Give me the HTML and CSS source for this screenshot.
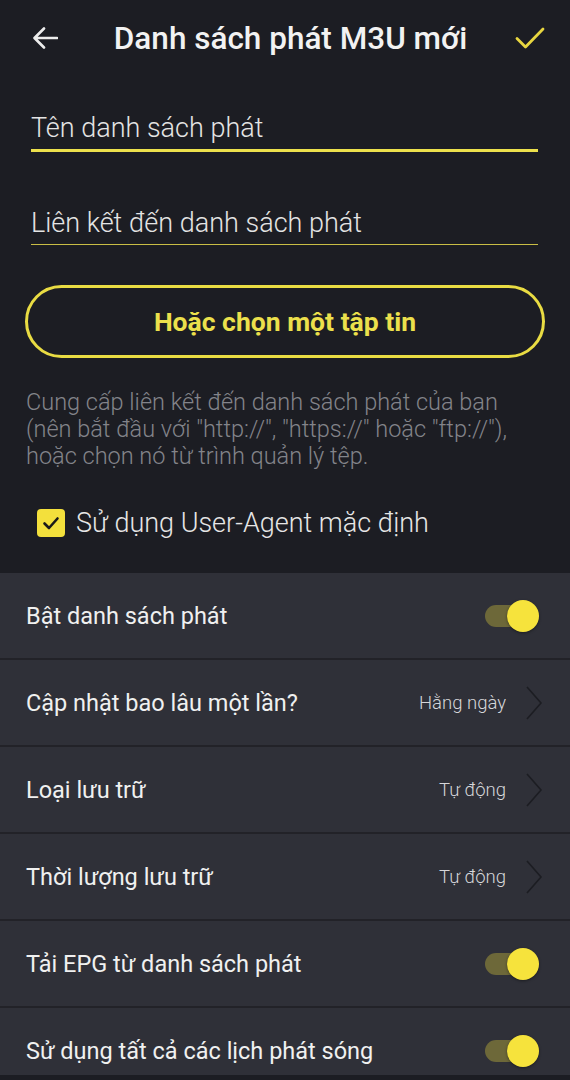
FILE: index.html
```html
<!DOCTYPE html>
<html lang="vi">
<head>
  <meta charset="UTF-8">
  <meta name="viewport" content="width=device-width, initial-scale=1.0">
  <title>Danh sách phát M3U mới</title>
  <link rel="stylesheet" href="styles.css">
</head>
<body>

  <div class="page">
    <div class="header">
      <svg class="back" width="26" height="24" viewBox="0 0 26 24">
        <path d="M25 12H3M12 2.5L2.5 12L12 21.5" fill="none" stroke="#ececec" stroke-width="2.6" stroke-linecap="round" stroke-linejoin="round"/>
      </svg>
      <h1 class="title">Danh sách phát M3U mới</h1>
      <svg class="done" width="30" height="24" viewBox="0 0 30 24">
        <path d="M2 12.5L10.5 21L28 3" fill="none" stroke="#e8d640" stroke-width="2.8" stroke-linecap="round" stroke-linejoin="round"/>
      </svg>
    </div>

    <div class="form">
      <div class="field active">Tên danh sách phát</div>
      <div class="field">Liên kết đến danh sách phát</div>

      <div class="file-btn">Hoặc chọn một tập tin</div>

      <p class="hint">Cung cấp liên kết đến danh sách phát của bạn (nên bắt đầu với "http://", "https://" hoặc "ftp://"), hoặc chọn nó từ trình quản lý tệp.</p>

      <div class="check-row">
        <span class="checkbox">
          <svg width="20" height="20" viewBox="0 0 20 20">
            <path d="M3.5 10.5L8 15L16.5 5.5" fill="none" stroke="#1a1a1a" stroke-width="2.6" stroke-linecap="round" stroke-linejoin="round"/>
          </svg>
        </span>
        <span class="check-label">Sử dụng User-Agent mặc định</span>
      </div>
    </div>

    <div class="list">
      <div class="row">
        <span class="label">Bật danh sách phát</span>
        <span class="toggle"><span class="thumb"></span></span>
      </div>
      <div class="row">
        <span class="label">Cập nhật bao lâu một lần?</span>
        <span class="value">Hằng ngày</span>
        <svg class="chev" width="18" height="34" viewBox="0 0 18 34"><path d="M2 1L16 17L2 33" fill="none" stroke="#1c1d22" stroke-width="1.6"/></svg>
      </div>
      <div class="row">
        <span class="label">Loại lưu trữ</span>
        <span class="value">Tự động</span>
        <svg class="chev" width="18" height="34" viewBox="0 0 18 34"><path d="M2 1L16 17L2 33" fill="none" stroke="#1c1d22" stroke-width="1.6"/></svg>
      </div>
      <div class="row">
        <span class="label">Thời lượng lưu trữ</span>
        <span class="value">Tự động</span>
        <svg class="chev" width="18" height="34" viewBox="0 0 18 34"><path d="M2 1L16 17L2 33" fill="none" stroke="#1c1d22" stroke-width="1.6"/></svg>
      </div>
      <div class="row">
        <span class="label">Tải EPG từ danh sách phát</span>
        <span class="toggle"><span class="thumb"></span></span>
      </div>
      <div class="row">
        <span class="label">Sử dụng tất cả các lịch phát sóng</span>
        <span class="toggle"><span class="thumb"></span></span>
      </div>
    </div>
  </div>

</body>
</html>
```

FILE: styles.css
```css
body {
  margin: 0;
  background: #1c1d23;
  font-family: Roboto, "Noto Sans", sans-serif;
  color: #ececec;
}
.page {
  height: 1080px;
  overflow: hidden;
}
.header {
  height: 76px;
  display: flex;
  align-items: center;
  padding: 0 25px 0 32px;
}
.back {
  flex: none;
}
.title {
  flex: 1;
  margin: 0;
  text-align: center;
  font-size: 31.5px;
  font-weight: 500;
  color: #f2f2f2;
  padding-left: 8px;
  white-space: nowrap;
}
.done {
  flex: none;
}
.form {
  padding: 36px 25px 0 25px;
}
.field {
  margin: 0 7px 0 6px;
  font-size: 27px;
  font-weight: 300;
  line-height: 32px;
  padding-bottom: 5px;
  color: #e4e4e4;
  border-bottom: 1.5px solid #c9bd45;
}
.field.active {
  border-bottom: 3px solid #ece04c;
  margin-bottom: 55px;
}
.file-btn {
  margin-top: 40px;
  height: 67px;
  border: 3px solid #e9dc43;
  border-radius: 40px;
  display: flex;
  align-items: center;
  justify-content: center;
  font-size: 26.5px;
  font-weight: 700;
  color: #ece04c;
}
.hint {
  margin: 31px 20px 0 1px;
  font-size: 23.5px;
  font-weight: 300;
  line-height: 27px;
  color: #83848a;
}
.check-row {
  display: flex;
  align-items: center;
  margin: 38px 0 0 12px;
  height: 29px;
  padding-bottom: 36px;
}
.checkbox {
  width: 28px;
  height: 28px;
  border-radius: 4px;
  background: #f3e03c;
  display: flex;
  align-items: center;
  justify-content: center;
}
.check-label {
  margin-left: 11px;
  font-size: 27px;
  font-weight: 300;
  color: #e6e6e6;
}
.list {
  background: #2f3038;
  height: 502px;
  overflow: hidden;
}
.row {
  height: 85px;
  display: flex;
  align-items: center;
  padding: 0 27px 0 26px;
  border-bottom: 2px solid #222228;
}
.label {
  flex: 1;
  font-size: 23.5px;
  color: #f0f0f0;
}
.value {
  font-size: 18.5px;
  font-weight: 300;
  color: #d6d6da;
  margin-right: 19px;
}
.toggle {
  position: relative;
  width: 48px;
  height: 22px;
  border-radius: 11px;
  background: #6d6839;
  margin-right: 10px;
}
.thumb {
  position: absolute;
  right: -6px;
  top: -5px;
  width: 32px;
  height: 32px;
  border-radius: 50%;
  background: #f6e33c;
  box-shadow: 0 1px 3px rgba(0, 0, 0, 0.4);
}
```
